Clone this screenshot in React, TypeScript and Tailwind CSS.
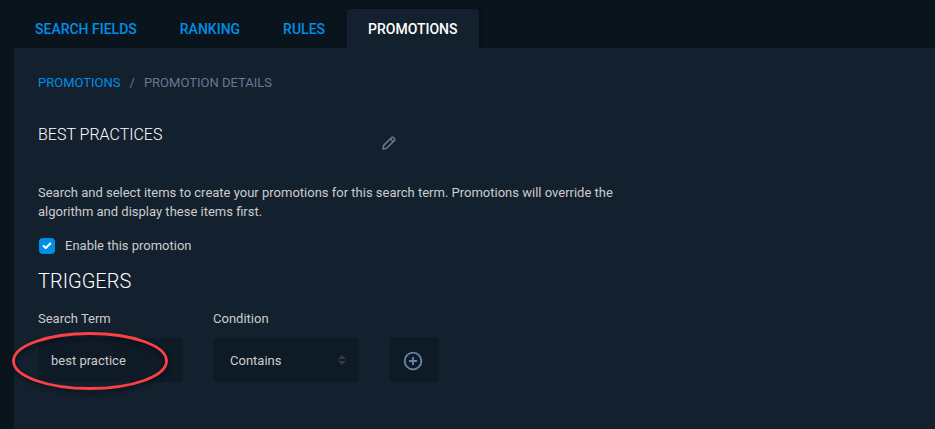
import { Check, CirclePlus } from "lucide-react";
import { useState } from "react";

const tabs = ["SEARCH FIELDS", "RANKING", "RULES", "PROMOTIONS"];

function PencilIcon() {
  return (
    <svg viewBox="0 0 14 14" className="size-3.5" fill="none" stroke="currentColor" strokeWidth="1.5" aria-hidden="true">
      <path d="M1 13L1.7 9.4L9.6 1.5Q10.5 .7 11.4 1.5L12.5 2.6Q13.3 3.5 12.5 4.4L4.6 12.3Z" strokeLinejoin="round" />
      <path d="M8.2 2.9L11.1 5.8" />
    </svg>
  );
}

function SortArrows() {
  return (
    <svg viewBox="0 0 8 10" className="h-2.5 w-2" fill="currentColor" aria-hidden="true">
      <path d="M4 0L8 4H0Z" />
      <path d="M0 6H8L4 10Z" />
    </svg>
  );
}

export default function App() {
  const [activeTab, setActiveTab] = useState("PROMOTIONS");
  const [enabled, setEnabled] = useState(true);
  const [term, setTerm] = useState("best practice");
  const [condition, setCondition] = useState("Contains");

  return (
    <div className="flex min-h-screen flex-col bg-[#0a141d] pl-3.5 font-['Roboto',sans-serif] text-[13px] leading-5 text-[#cccccc]">
      <nav className="flex gap-px pt-[9px]">
        {tabs.map((tab) => (
          <button
            key={tab}
            type="button"
            onClick={() => setActiveTab(tab)}
            className={`h-[39px] cursor-pointer rounded-t px-[21px] text-sm font-medium ${
              tab === activeTab
                ? "bg-[#13202e] text-white shadow-[2px_0_4px_rgba(0,0,0,0.25)]"
                : "text-[#008ee6]"
            }`}
          >
            {tab}
          </button>
        ))}
      </nav>

      <main className="relative flex-1 bg-[#13202e] px-6 pt-[25px] pb-11">
        <div className="flex gap-[9px]">
          <a href="#promotions" className="text-[#008ee6]">
            PROMOTIONS
          </a>
          <span className="text-[#66798f]">/</span>
          <span className="text-[#66798f]">PROMOTION DETAILS</span>
        </div>

        <div className="mt-[30px] flex w-[358px] items-start justify-between">
          <h1 className="text-base leading-6 font-light text-white">BEST PRACTICES</h1>
          <button type="button" aria-label="Edit name" className="mt-[13px] cursor-pointer text-[#66798f]">
            <PencilIcon />
          </button>
        </div>

        <p className="mt-[33px] max-w-[600px] leading-[19px]">
          Search and select items to create your promotions for this search term. Promotions will override the
          algorithm and display these items first.
        </p>

        <label className="mt-[15px] flex w-fit cursor-pointer items-center gap-2.5">
          <span className="ml-px grid size-4">
            <input
              type="checkbox"
              checked={enabled}
              onChange={(event) => setEnabled(event.target.checked)}
              className="peer col-start-1 row-start-1 size-4 appearance-none rounded bg-[#0e1a26] checked:bg-[#008ee6]"
            />
            <Check
              className="pointer-events-none invisible col-start-1 row-start-1 size-2.5 place-self-center text-white peer-checked:visible"
              strokeWidth={5}
              aria-hidden="true"
            />
          </span>
          Enable this promotion
        </label>

        <h2 className="mt-[13px] text-xl leading-6 font-light text-white">TRIGGERS</h2>

        <div className="mt-4 flex items-end gap-[30px]">
          <div className="w-[145px]">
            <label htmlFor="search-term">Search Term</label>
            <div className="relative mt-[9px]">
              <input
                id="search-term"
                value={term}
                onChange={(event) => setTerm(event.target.value)}
                className="block h-11 w-full rounded bg-[#0e1a26] px-[13px] outline-none"
              />
              <svg
                viewBox="0 0 156 58"
                className="pointer-events-none absolute -top-1.5 -left-[26px] h-[58px] w-[156px] max-w-none overflow-visible drop-shadow-[1px_3px_2px_rgba(0,0,0,0.45)]"
                fill="none"
                aria-hidden="true"
              >
                <ellipse cx="78" cy="29" rx="76.5" ry="27.5" stroke="#fb4148" strokeWidth="2.8" />
              </svg>
            </div>
          </div>

          <div className="w-[146px]">
            <label htmlFor="condition">Condition</label>
            <div className="mt-[9px] grid items-center">
              <select
                id="condition"
                value={condition}
                onChange={(event) => setCondition(event.target.value)}
                className="col-start-1 row-start-1 h-11 w-full appearance-none rounded bg-[#0e1a26] px-[17px] pt-px outline-none"
              >
                <option>Contains</option>
                <option>Equals</option>
                <option>Starts with</option>
              </select>
              <span className="pointer-events-none col-start-1 row-start-1 mr-[13px] justify-self-end text-[#343a40]">
                <SortArrows />
              </span>
            </div>
          </div>

          <button
            type="button"
            aria-label="Add trigger"
            className="flex h-[45px] w-[50px] cursor-pointer items-center justify-center rounded bg-[#0e1a26] pt-0.5 pr-[3px] text-[#6884a8]"
          >
            <CirclePlus className="size-5" strokeWidth={2.25} />
          </button>
        </div>
      </main>
    </div>
  );
}
